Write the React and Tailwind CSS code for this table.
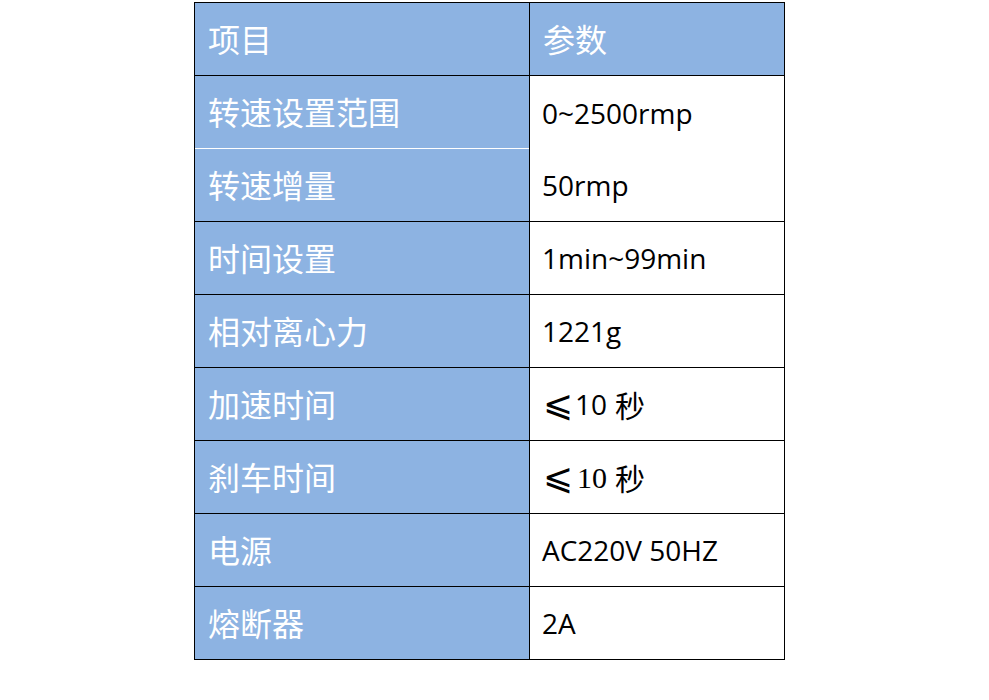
const CJK = '"Noto Sans CJK SC", sans-serif';
const LAT = '"Open Sans", "Noto Sans CJK SC", sans-serif';

const leftRows = [
  "项目",
  "转速设置范围",
  "转速增量",
  "时间设置",
  "相对离心力",
  "加速时间",
  "刹车时间",
  "电源",
  "熔断器",
];

function Lt({ children }) {
  return <span style={{ fontFamily: LAT }}>{children}</span>;
}

function Le({ children }) {
  return (
    <span
      className="inline-block w-[32px] text-[36px] font-extralight leading-none"
      style={{ fontFamily: '"DejaVu Sans", sans-serif' }}
    >
      {children}
    </span>
  );
}

function Cn({ children }) {
  return <span className="ml-[8px] text-[30px]" style={{ fontFamily: CJK }}>{children}</span>;
}

export default function App() {
  return (
    <div className="min-h-screen bg-white">
      <div className="ml-[194px] mt-[2px] flex w-[591px] border border-black">
        {/* left column */}
        <div className="flex w-[335px] flex-col border-r border-black bg-[#8db3e2]">
          {leftRows.map((t, i) => (
            <div
              key={t}
              className={
                "flex items-center pl-[13px] pb-[3px] text-[32px] text-white " +
                (i === leftRows.length - 1
                  ? "h-[72px]"
                  : i === 1
                  ? "h-[73px] border-b border-white"
                  : "h-[73px] border-b border-black")
              }
              style={{ fontFamily: CJK }}
            >
              {t}
            </div>
          ))}
        </div>

        {/* right column */}
        <div className="flex w-[254px] flex-col text-[28px] text-black">
          <div
            className="flex h-[73px] items-center border-b border-black bg-[#8db3e2] pb-[3px] pl-[13px] text-[32px] text-white"
            style={{ fontFamily: CJK }}
          >
            参数
          </div>
          <div className="flex h-[146px] flex-col border-b border-black pl-[12px]">
            <div className="flex h-[73px] items-center"><Lt>0~2500rmp</Lt></div>
            <div className="flex h-[72px] items-center"><Lt>50rmp</Lt></div>
          </div>
          <div className="flex h-[73px] items-center border-b border-black pl-[12px]"><Lt>1min~99min</Lt></div>
          <div className="flex h-[73px] items-center border-b border-black pl-[12px]"><Lt>1221g</Lt></div>
          <div className="flex h-[73px] items-center border-b border-black pl-[13px]">
            <Le>⩽</Le>
            <Lt>10</Lt>
            <Cn>秒</Cn>
          </div>
          <div className="flex h-[73px] items-center border-b border-black pl-[13px]">
            <Le>⩽</Le>
            <span className="ml-[2px] text-[30px]" style={{ fontFamily: '"Liberation Serif", serif' }}>10</span>
            <Cn>秒</Cn>
          </div>
          <div className="flex h-[73px] items-center border-b border-black pl-[12px]"><Lt>AC220V 50HZ</Lt></div>
          <div className="flex h-[72px] items-center pl-[12px]"><Lt>2A</Lt></div>
        </div>
      </div>
    </div>
  );
}
